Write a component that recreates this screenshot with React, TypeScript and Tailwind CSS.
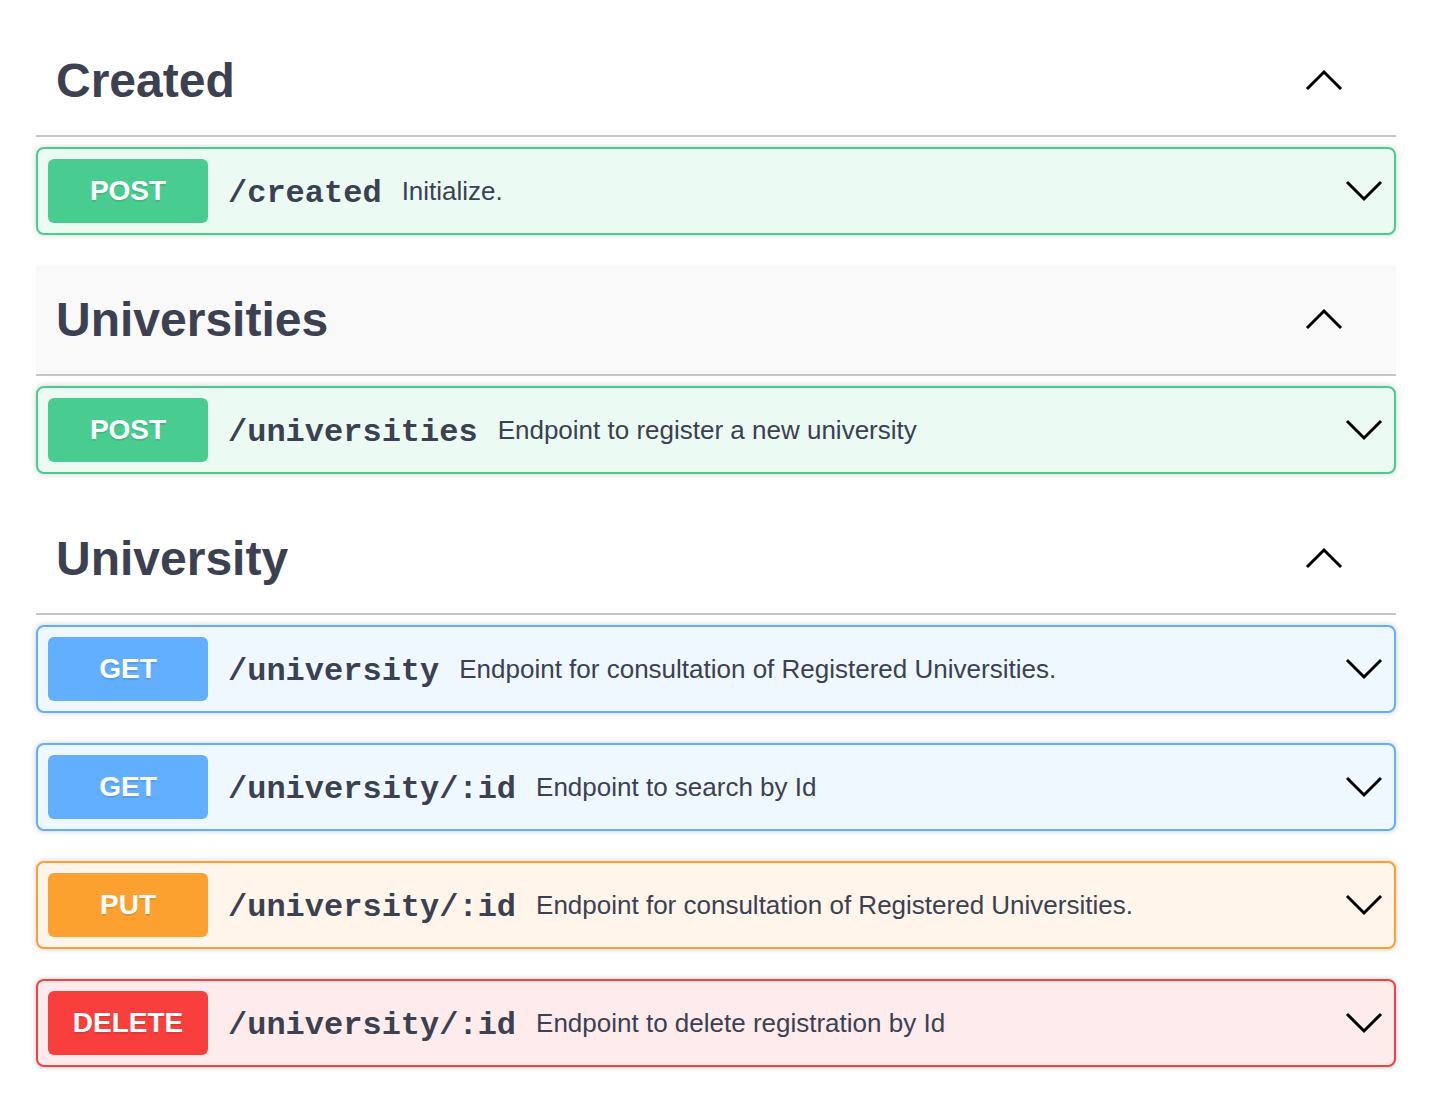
type Method = "POST" | "GET" | "PUT" | "DELETE";

interface Operation {
  method: Method;
  path: string;
  summary: string;
}

interface Section {
  tag: string;
  hovered?: boolean;
  ops: Operation[];
}

const sections: Section[] = [
  {
    tag: "Created",
    ops: [{ method: "POST", path: "/created", summary: "Initialize." }],
  },
  {
    tag: "Universities",
    hovered: true,
    ops: [{ method: "POST", path: "/universities", summary: "Endpoint to register a new university" }],
  },
  {
    tag: "University",
    ops: [
      { method: "GET", path: "/university", summary: "Endpoint for consultation of Registered Universities." },
      { method: "GET", path: "/university/:id", summary: "Endpoint to search by Id" },
      { method: "PUT", path: "/university/:id", summary: "Endpoint for consultation of Registered Universities." },
      { method: "DELETE", path: "/university/:id", summary: "Endpoint to delete registration by Id" },
    ],
  },
];

const methodStyles: Record<Method, { card: string; badge: string }> = {
  POST: { card: "border-[#49cc90] bg-[#ecfaf4]", badge: "bg-[#49cc90]" },
  GET: { card: "border-[#61affe] bg-[#eff7ff]", badge: "bg-[#61affe]" },
  PUT: { card: "border-[#fca130] bg-[#fff5ea]", badge: "bg-[#fca130]" },
  DELETE: { card: "border-[#f93e3e] bg-[#feecec]", badge: "bg-[#f93e3e]" },
};

function Chevron({ up }: { up?: boolean }) {
  return (
    <svg width="40" height="40" viewBox="0 0 40 40" fill="none" className="shrink-0">
      <polyline
        points={up ? "3,28 20,11 37,28" : "3,11 20,28 37,11"}
        stroke="#000"
        strokeWidth="3"
        strokeLinejoin="miter"
      />
    </svg>
  );
}

function OperationRow({ op }: { op: Operation }) {
  const s = methodStyles[op.method];
  return (
    <div
      className={`mb-[30px] flex items-center rounded-[8px] border-2 p-[10px] shadow-[0_0_6px_rgba(0,0,0,0.19)] ${s.card}`}
    >
      <div
        className={`flex h-[64px] w-[160px] shrink-0 items-center justify-center rounded-[6px] text-[28px] font-bold text-white [text-shadow:0_2px_0_rgba(0,0,0,0.1)] ${s.badge}`}
      >
        {op.method}
      </div>
      <span className="px-[20px] pt-[5px] font-['Liberation_Mono',monospace] text-[32px] font-bold text-[#3b4151]">
        {op.path}
      </span>
      <span className="flex-1 text-[26px] text-[#3b4151]">{op.summary}</span>
      <Chevron />
    </div>
  );
}

export default function App() {
  return (
    <div className="min-h-[1100px] bg-white pl-[36px] pr-[40px] pt-[26px] font-['Liberation_Sans',Arial,sans-serif]">
      {sections.map((sec) => (
        <div key={sec.tag}>
          <div
            className={`mb-[10px] flex h-[111px] items-center border-b-2 border-[#c4c6cb] pl-[20px] pr-[52px] ${
              sec.hovered ? "bg-[#f9f9f9]" : ""
            }`}
          >
            <h3 className="flex-1 text-[48px] font-bold text-[#3b4151]">{sec.tag}</h3>
            <Chevron up />
          </div>
          {sec.ops.map((op, i) => (
            <OperationRow key={i} op={op} />
          ))}
        </div>
      ))}
    </div>
  );
}
